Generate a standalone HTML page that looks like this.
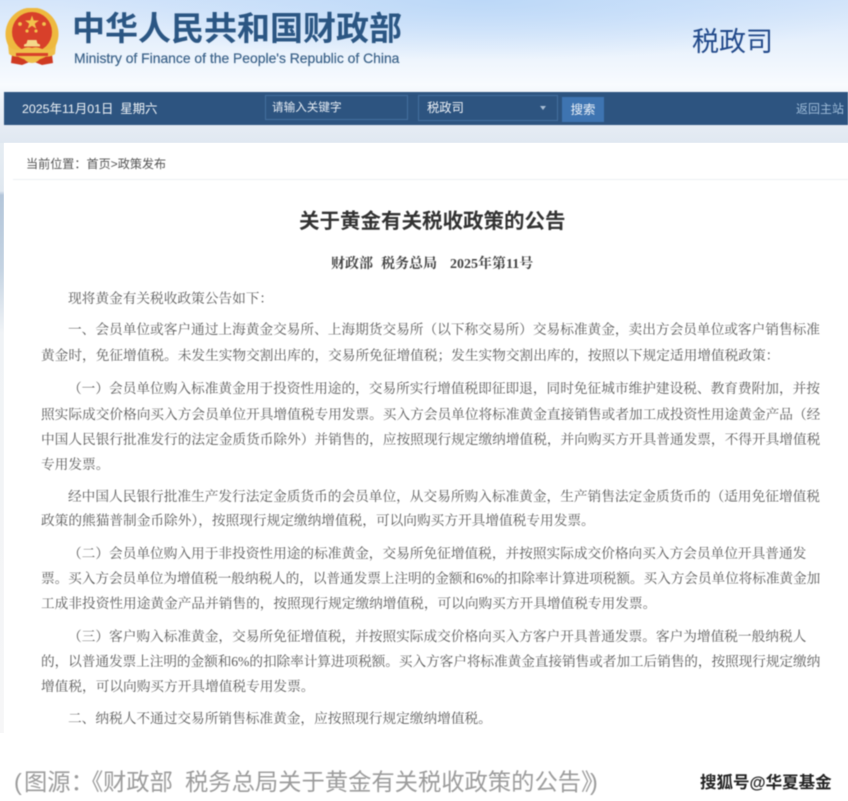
<!DOCTYPE html>
<html lang="zh"><head><meta charset="utf-8"><title>关于黄金有关税收政策的公告</title>
<style>
html,body{margin:0;padding:0;background:#fff}
#p{position:relative;width:848px;height:801px;overflow:hidden;background:#fff;font-family:"Liberation Sans","Noto Sans CJK SC",sans-serif}
#bg{position:absolute;left:0;top:0;width:848px;height:143px;background:radial-gradient(ellipse 420px 60px at 480px 0,#bcd8f8 0,rgba(188,216,248,0) 100%),linear-gradient(180deg,#d4e5fa 0,#e6f0fc 40px,#f8fbfe 85px,#eef3f9 100px,#e0e8f1 143px)}
#st{position:absolute;left:0;top:143px;width:4px;height:590px;background:linear-gradient(180deg,#e6edf3 0,#e0e8f0 48px,#b4c6da 52px,#c4d3e2 125px,#f0f3f6 190px,#f6f6f7 590px)}
#f{position:absolute;left:0;top:0;width:848px;height:801px;filter:blur(.4px)}
.a{position:absolute;white-space:nowrap}
.l{position:absolute;white-space:nowrap;font:13.68px/20px "Liberation Serif","Noto Serif CJK SC",serif;color:#5a5a5a}
.t{letter-spacing:-.08px}
.c{position:absolute;white-space:nowrap;top:765px;font-size:23.3px;line-height:34px;color:#9c9c9c}
</style></head><body><div id="p"><div id="bg"></div><div id="st"></div><div id="f">
<svg class="a" style="left:4px;top:8px" width="56" height="58" viewBox="0 0 56 58">
<path d="M9 38 L7 55 L18 57 L28 53 L38 57 L49 55 L47 38Z" fill="#cf3a22"/>
<circle cx="28" cy="26" r="26.5" fill="#eeb93f"/>
<circle cx="28" cy="24" r="20" fill="#d8402a"/>
<path d="M28 7.500l1.700 4.900 5.200.1-4.100 3.200 1.500 5-4.300-2.900-4.300 2.900 1.500-5-4.100-3.200 5.200-.1z" fill="#f2c24c"/>
<g fill="#f2c24c"><circle cx="16" cy="16" r="1.900"/><circle cx="40" cy="16" r="1.900"/><circle cx="23" cy="23" r="1.600"/><circle cx="32" cy="23" r="1.600"/></g>
<path d="M20 38.500h16v-2l-2.500-1-1-3.500h-9l-1 3.500-2.500 1z" fill="#f4d98a"/>
<path d="M4 37q5 7 14 4q5-3 10-1q5-2 10 1q9 3 14-4l-1 9q-5 4-13 2q-4 7-10 7t-10-7q-8 2-13-2z" fill="#efbf4a"/>
<path d="M12 45h32v3H12z" fill="#d8402a"/>
</svg>
<div class="a" style="left:72px;top:10px;font-size:33px;line-height:38px;font-weight:700;color:#2b5683">中华人民共和国财政部</div>
<div class="a" style="left:74px;top:50px;font-size:13.9px;line-height:16px;color:#3b6289;-webkit-text-stroke:.2px #3b6289">Ministry of Finance of the People's Republic of China</div>
<div class="a" style="left:692px;top:24px;font-size:27px;line-height:36px;color:#21498a">税政司</div>

<div class="a" style="left:4px;top:92px;width:844px;height:33px;background:#2d5480"></div>
<div class="a" style="left:22px;top:101px;font-size:12.4px;line-height:16px;color:#f0f4f8">2025年11月01日&nbsp; 星期六</div>
<div class="a" style="left:265px;top:95px;width:141px;height:23px;border:1px solid #44709f"></div>
<div class="a" style="left:272px;top:100px;font-size:11.6px;line-height:16px;color:#e8eef5">请输入关键字</div>
<div class="a" style="left:418px;top:95px;width:138px;height:24px;border:1px solid #44709f"></div>
<div class="a" style="left:427px;top:100px;font-size:12.3px;line-height:17px;color:#eef2f7">税政司</div>
<div class="a" style="left:540px;top:106px;width:0;height:0;border:3.500px solid transparent;border-top:4px solid #a9bed4"></div>
<div class="a" style="left:562px;top:97px;width:42px;height:25px;background:#3e74b1;color:#eef3f9;font-size:12.4px;line-height:26px;text-align:center">搜索</div>
<div class="a" style="left:796px;top:101px;font-size:12px;line-height:16px;color:#9dbbd8">返回主站</div>

<div class="a" style="left:4px;top:143px;width:844px;height:590px;background:#fff"></div>
<div class="a" style="left:13px;top:179px;width:835px;height:1px;background:#edf0f3"></div>
<div class="a" style="left:26px;top:156px;font-size:12.1px;line-height:16px;color:#555">当前位置：首页&gt;政策发布</div>
<div class="a" style="left:299px;top:208px;font-size:20.5px;line-height:28px;font-weight:700;color:#333">关于黄金有关税收政策的公告</div>
<div class="a" style="left:331px;top:256px;font:700 14px/18px 'Liberation Serif','Noto Serif CJK SC',serif;color:#444">财政部</div>
<div class="a" style="left:381px;top:256px;font:700 14px/18px 'Liberation Serif','Noto Serif CJK SC',serif;color:#444">税务总局</div>
<div class="a" style="left:450px;top:256px;font:700 14px/18px 'Liberation Serif','Noto Serif CJK SC',serif;color:#444">2025年第11号</div>

<div class="l" style="left:68px;top:289px">现将黄金有关税收政策公告如下：</div>
<div class="l" style="left:68px;top:320px">一、会员单位或客户通过上海黄金交易所、上海期货交易所（以下称交易所）交易标准黄金，卖出方会员单位或客户销售标准</div>
<div class="l" style="left:41px;top:346px">黄金时，免征增值税。未发生实物交割出库的，交易所免征增值税；发生实物交割出库的，按照以下规定适用增值税政策：</div>
<div class="l" style="left:68px;top:379px">（一）会员单位购入标准黄金用于投资性用途的，交易所实行增值税即征即退，同时免征城市维护建设税、教育费附加，并按</div>
<div class="l" style="left:41px;top:405px">照实际成交价格向买入方会员单位开具增值税专用发票。买入方会员单位将标准黄金直接销售或者加工成投资性用途黄金产品（经</div>
<div class="l" style="left:41px;top:430px">中国人民银行批准发行的法定金质货币除外）并销售的，应按照现行规定缴纳增值税，并向购买方开具普通发票，不得开具增值税</div>
<div class="l" style="left:41px;top:455px">专用发票。</div>
<div class="l" style="left:68px;top:487px">经中国人民银行批准生产发行法定金质货币的会员单位，从交易所购入标准黄金，生产销售法定金质货币的（适用免征增值税</div>
<div class="l" style="left:41px;top:511px">政策的熊猫普制金币除外），按照现行规定缴纳增值税，可以向购买方开具增值税专用发票。</div>
<div class="l" style="left:68px;top:544px">（二）会员单位购入用于非投资性用途的标准黄金，交易所免征增值税，并按照实际成交价格向买入方会员单位开具普通发</div>
<div class="l t" style="left:41px;top:569px">票。买入方会员单位为增值税一般纳税人的，以普通发票上注明的金额和6%的扣除率计算进项税额。买入方会员单位将标准黄金加</div>
<div class="l" style="left:41px;top:594px">工成非投资性用途黄金产品并销售的，按照现行规定缴纳增值税，可以向购买方开具增值税专用发票。</div>
<div class="l" style="left:68px;top:627px">（三）客户购入标准黄金，交易所免征增值税，并按照实际成交价格向买入方客户开具普通发票。客户为增值税一般纳税人</div>
<div class="l t" style="left:41px;top:652px">的，以普通发票上注明的金额和6%的扣除率计算进项税额。买入方客户将标准黄金直接销售或者加工后销售的，按照现行规定缴纳</div>
<div class="l" style="left:41px;top:677px">增值税，可以向购买方开具增值税专用发票。</div>
<div class="l" style="left:68px;top:709px">二、纳税人不通过交易所销售标准黄金，应按照现行规定缴纳增值税。</div>

<div class="c" style="left:14px">(</div>
<div class="c" style="left:24px">图源：</div>
<div class="c" style="left:80px">《</div>
<div class="c" style="left:103px">财政部</div>
<div class="c" style="left:185px">税务总局关于黄金有关税收政策的公告</div>
<div class="c" style="left:581px">》</div>
<div class="c" style="left:590px">)</div>
<div class="a" style="left:700px;top:773px;font-size:16.5px;line-height:20px;font-weight:700;color:#222;text-shadow:0 0 2px #fff">搜狐号@华夏基金</div>
</div></div></body></html>
